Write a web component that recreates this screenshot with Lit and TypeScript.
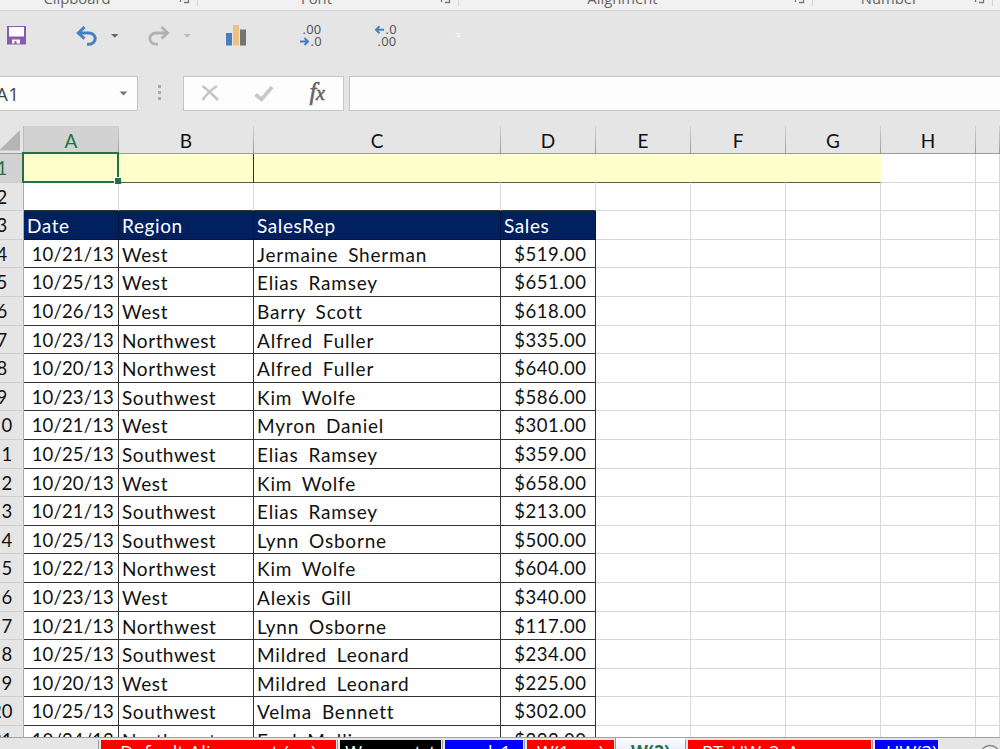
import { LitElement, html, css } from "lit";
import { customElement } from "lit/decorators.js";
import { classMap } from "lit/directives/class-map.js";

const ROWS: [string, string, string, string][] = [
  ["10/21/13", "West", "Jermaine Sherman", "$519.00"],
  ["10/25/13", "West", "Elias Ramsey", "$651.00"],
  ["10/26/13", "West", "Barry Scott", "$618.00"],
  ["10/23/13", "Northwest", "Alfred Fuller", "$335.00"],
  ["10/20/13", "Northwest", "Alfred Fuller", "$640.00"],
  ["10/23/13", "Southwest", "Kim Wolfe", "$586.00"],
  ["10/21/13", "West", "Myron Daniel", "$301.00"],
  ["10/25/13", "Southwest", "Elias Ramsey", "$359.00"],
  ["10/20/13", "West", "Kim Wolfe", "$658.00"],
  ["10/21/13", "Southwest", "Elias Ramsey", "$213.00"],
  ["10/25/13", "Southwest", "Lynn Osborne", "$500.00"],
  ["10/22/13", "Northwest", "Kim Wolfe", "$604.00"],
  ["10/23/13", "West", "Alexis Gill", "$340.00"],
  ["10/21/13", "Northwest", "Lynn Osborne", "$117.00"],
  ["10/25/13", "Southwest", "Mildred Leonard", "$234.00"],
  ["10/20/13", "West", "Mildred Leonard", "$225.00"],
  ["10/25/13", "Southwest", "Velma Bennett", "$302.00"],
  ["10/24/13", "Northwest", "Fred Mulli", "$222.00"],
];
const COLS = ["A", "B", "C", "D", "E", "F", "G", "H", ""];

@customElement("ribbon-labels")
class RibbonLabels extends LitElement {
  static styles = css`
    :host { display: grid; grid-template-columns: 198px 261px 354px 180px 1fr; overflow: hidden;
      background: #f1f1f1; border-bottom: 1px solid #d2d2d2; box-sizing: border-box; height: 11px;
      font: 14.8px/16px "Open Sans", sans-serif; color: #666; }
    .group { display: flex; height: 6px; border-right: 1px solid #d4d4d4; }
    .label { flex: 1; text-align: center; margin-top: -10px; height: 20px; }
    .launch { width: 12px; height: 6px; margin-right: 6px; }
    .g0 .label { margin-right: 25px; }
    .g1 .label { margin-right: 5px; }
    .g2 .label, .g3 .label { margin-right: 8px; }
  `;
  render() {
    return ["Clipboard", "Font", "Alignment", "Number"].map((t, i) => html`
      <div class="group g${i}"><span class="label">${t}</span>
      <svg class="launch" viewBox="0 0 12 6"><path d="M1.5 0V2M5 2.5H9.5V0" fill="none" stroke="#777" stroke-width="1.3"/></svg></div>`);
  }
}

@customElement("quick-bar")
class QuickBar extends LitElement {
  static styles = css`
    :host { display: block; height: 65px; background: #e5e5e5; }
    svg { display: block; }
    text { font: 12.9px "Open Sans", sans-serif; fill: #505050; letter-spacing: 0.3px; }
  `;
  render() {
    return html`<svg width="1000" height="65" viewBox="0 11 1000 65">
      <path d="M7 26h19v18.500H7z" fill="#8c59ae"/><path d="M9 27h15v9.500H9z" fill="#fff"/><path d="M12 39.500h8v4h-8z" fill="#fff"/><path d="M14.500 41h2v3h-2z" fill="#8c59ae"/>
      <g fill="none" stroke="#4a80bb" stroke-width="3"><path d="M79 33H89a6.2 5.6 0 0 1 0 11.2H87"/><path d="M84.500 27L78.300 33L84.500 38.600"/></g>
      <path d="M111 34h7.500l-3.700 3.800z" fill="#666"/>
      <g fill="none" stroke="#b2b2b2" stroke-width="2.8"><path d="M167 33H156a6.2 5.6 0 0 0 0 11.2H158"/><path d="M161.500 27L167.500 33L161.500 38.600"/></g>
      <path d="M183.500 34h7.500l-3.700 3.800z" fill="#bdbdbd"/>
      <path d="M226 33h6v12.500h-6z" fill="#4a7ebb"/><path d="M233 25h6v20.500h-6z" fill="#ebc27f"/><path d="M240 29.500h6v16h-6z" fill="#757575"/>
      <text x="302.500" y="34">.00</text><text x="310.500" y="46">.0</text>
      <text x="385.500" y="34">.0</text><text x="377.500" y="46">.00</text>
      <g fill="none" stroke="#4a80bb" stroke-width="2"><path d="M300 41.500h8M304.500 38l3.500 3.500l-3.500 3.500"/><path d="M384 29.700h-8M379.500 26.200l-3.500 3.500l3.500 3.500"/></g>
      <path d="M455.500 33h6v1h-6zM455.500 35.500h6l-3 2.500z" fill="#f3f3f3"/>
    </svg>`;
  }
}

@customElement("formula-bar")
class FormulaBar extends LitElement {
  static styles = css`
    :host { display: flex; height: 50px; background: #e5e5e5; }
    .box { box-sizing: border-box; height: 35px; background: #fdfdfd; border: 1px solid #c6c6c6; }
    .name { width: 138px; border-left: 0; display: flex; align-items: center; justify-content: space-between; color: #444; font: 18.8px "Open Sans", sans-serif; }
    .ref { margin-left: -4px; letter-spacing: .4px; }
    .arrow { margin-right: 9px; }
    .dots { width: 45px; height: 35px; }
    .tools { width: 161px; }
    .tools svg { display: block; }
    .input { flex: 1; margin-left: 5px; border-right: 0; }
    .fx { font: italic 25px "Liberation Serif", serif; fill: #666; stroke: #666; stroke-width: .6px; }
    .x { font-size: 20px; }
  `;
  render() {
    return html`
      <div class="box name"><span class="ref">A1</span><svg class="arrow" width="9" height="5"><path d="M0.500 0.500h8L4.500 4.500z" fill="#777"/></svg></div>
      <svg class="dots" viewBox="0 0 45 35"><path d="M20 9h3v3h-3zM20 15h3v3h-3zM20 21h3v3h-3z" fill="#aaa"/></svg>
      <div class="box tools"><svg width="159" height="33" viewBox="184 77 159 33">
        <path d="M202.500 86Q209 91 218 100M217 86Q209 91 202.500 100" fill="none" stroke="#c4c4c4" stroke-width="2.500"/>
        <path d="M255.500 94.500L261.500 99.500L272 87" fill="none" stroke="#c8c8c8" stroke-width="3.600"/>
        <text class="fx" x="309.500" y="100">f<tspan class="x" x="316">x</tspan></text></svg></div>
      <div class="box input"></div>`;
  }
}

@customElement("sheet-grid")
class SheetGrid extends LitElement {
  static styles = css`
    :host { display: block; height: 611px; overflow: hidden; background: #fff; font: 19px/27px Lato, sans-serif; color: #111; }
    .row { display: grid; grid-template-columns: 24px 95px 135px 247px 95px 95px 95px 95px 95px 24px; grid-template-rows: 100%; height: 28.6px; }
    .heads { height: 28px; background: #e5e5e5; }
    .head, .cell, .num, .corner { box-sizing: border-box; white-space: nowrap; }
    .head { border-bottom: 1px solid #9c9c9c; text-align: center; line-height: 29px; position: relative; padding-right: 1px; }
    .head::after { content: ""; position: absolute; right: 0; top: 0; bottom: 0; width: 1px; background: linear-gradient(#d2d2d2, #999); }
    .head.on { background: #d2d2d2; color: #217346; }
    .corner { border-bottom: 1px solid #9c9c9c; border-right: 1px solid #bcbcbc; }
    .corner svg { display: block; }
    .num { display: flex; justify-content: flex-end; background: #e5e5e5; border-right: 1px solid #ababab; border-bottom: 1px solid #cfcfcf; padding-right: 9.500px; overflow: hidden; line-height: 29px; font-size: 18.5px; letter-spacing: 1.2px; }
    .num.one { padding-right: 14.500px; }
    .num.twenty { letter-spacing: 0; padding-right: 10.500px; }
    .num.on { background: #d2d2d2; color: #217346; }
    .cell { border-right: 1px solid #d8d8d8; border-bottom: 1px solid #d8d8d8; padding-left: 3px; line-height: 29.5px; letter-spacing: .6px; }
    .cell.data { border-color: #333; word-spacing: 4.2px; }
    .cell.rep { letter-spacing: .8px; }
    .cell.title { background: #002060; color: #fff; border-color: #061335; }
    .cell.over { border-bottom-color: #333; }
    .cell.date { letter-spacing: .15px; padding: 0 4px 0 0; text-align: right; font-size: 18.5px; }
    .cell.money { letter-spacing: .5px; padding: 0 8.5px 0 0; text-align: right; font-size: 18.5px; }
    .cell.yellow { background: #ffffcc; border-bottom-color: #5c5c48; border-right-color: #ffffcc; }
    .cell.edge { border-right-color: #333; }
    .cell.soft { border-right-color: #d8d8b0; }
    .cell.pick { position: relative; }
    .frame { position: absolute; left: -2px; top: -2px; width: 97px; height: 31px; box-sizing: border-box; border: 2px solid #217346; }
    .grip { position: absolute; right: -4px; bottom: -3px; width: 7px; height: 7px; background: #217346; border-left: 1px solid #fff; border-top: 1px solid #fff; box-sizing: border-box; }
  `;
  cells(n: number) {
    const rec = n === 3 ? ["Date", "Region", "SalesRep", "Sales"] : ROWS[n - 4];
    return COLS.map((_, c) => {
      const inTable = n >= 3 && c < 4;
      const k = {
        cell: true, data: inTable && n > 3, title: inTable && n === 3, over: n === 2 && c < 4,
        date: n > 3 && c === 0, rep: n > 3 && c === 2, money: n > 3 && c === 3,
        yellow: n === 1 && c < 7, edge: n === 1 && c === 1, soft: n === 1 && c === 0, pick: n === 1 && c === 0,
      };
      return html`<div class=${classMap(k)}>${inTable ? rec[c] : ""}${k.pick ? html`<div class="frame"><div class="grip"></div></div>` : ""}</div>`;
    });
  }
  render() {
    return html`
      <div class="row heads"><div class="corner"><svg width="22" height="27"><path d="M-1 24.500L20 4V24.500z" fill="#b4b4b4"/></svg></div>
        ${COLS.map((c, i) => html`<div class=${classMap({ head: true, on: i === 0 })}>${c}</div>`)}</div>
      ${Array.from({ length: 21 }, (_, i) => i + 1).map((n) => html`
        <div class="row"><div class=${classMap({ num: true, on: n === 1, one: n < 10, twenty: n >= 20 })}>${n}</div>${this.cells(n)}</div>`)}`;
  }
}

@customElement("sheet-tabs")
class SheetTabs extends LitElement {
  static styles = css`
    :host { display: flex; height: 12px; overflow: hidden; background: #e5e5e5; border-top: 1px solid #a0a0a0; box-sizing: border-box; padding-left: 98px;
      font: 18.2px/24px "Open Sans", sans-serif; color: #fff; }
    .tab { box-sizing: border-box; margin-top: 2px; height: 24px; white-space: nowrap; overflow: hidden; text-align: center; border-left: 1px solid #999; flex: none; }
    .fill { display: block; height: 24px; margin-left: 2px; margin-right: 1px; overflow: hidden; }
    .red { background: #f00; } .black { background: #000; } .blue { background: #00f; }
    .wide { letter-spacing: .3px; }
    .left { text-align: left; text-indent: 14px; }
    .tight { text-indent: 11px; }
    .active { margin-top: 0; background: linear-gradient(#fff, #d5d8f4); color: #217346; font-weight: bold; font-size: 17.5px; line-height: 27px; }
    .more { margin-left: 40px; margin-top: 6px; }
  `;
  render() {
    const tabs: [string, string, number][] = [
      ["Default Alignment (an)", "red wide", 239], ["W_sum_t_t", "black", 105], ["goal_1", "blue", 82], ["W(1_an)", "red", 91],
      ["W(2)", "active", 70], ["PT_HW_2_A", "red left", 187], ["HW(3)", "blue left tight", 67],
    ];
    return html`${tabs.map(([t, c, w]) => c === "active"
      ? html`<div class="tab active" style="width:${w}px">${t}</div>`
      : html`<div class="tab" style="width:${w}px"><span class="fill ${c}">${t}</span></div>`)}
      <svg class="more" width="22" height="20"><circle cx="11" cy="11" r="9.500" fill="#eee" stroke="#888" stroke-width="1.400"/></svg>`;
  }
}

@customElement("app-root")
class AppRoot extends LitElement {
  static styles = css`
    :host { display: flex; flex-direction: column; width: 1000px; height: 749px; overflow: hidden; }
  `;
  render() {
    return html`<ribbon-labels></ribbon-labels><quick-bar></quick-bar><formula-bar></formula-bar><sheet-grid></sheet-grid><sheet-tabs></sheet-tabs>`;
  }
}
